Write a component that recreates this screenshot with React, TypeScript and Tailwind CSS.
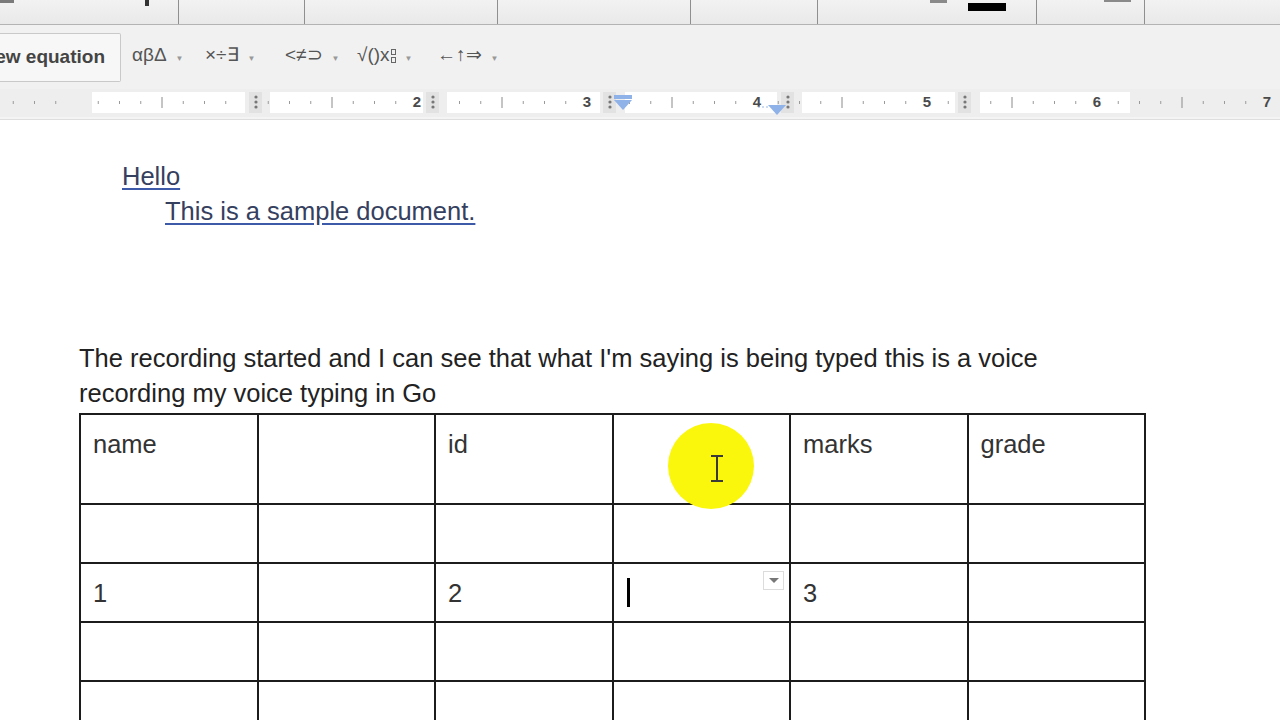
import React from 'react';

const font = { fontFamily: '"Liberation Sans", Arial, sans-serif' };

// column lines of the table, also used for ruler markers
const colLines = [258, 435, 612, 790, 967];
const whiteSegs: [number, number][] = [
  [92, 245],
  [270, 423],
  [447, 600],
  [625, 777],
  [802, 955],
  [980, 1130],
];

function Ruler() {
  const ticks: React.ReactNode[] = [];
  for (let k = -3; k <= 57; k++) {
    const x = 77 + k * 21.25;
    if (x > 1280) break;
    if (k % 8 === 0) {
      if (k > 8) {
        ticks.push(
          <text key={k} x={x} y={18} textAnchor="middle" fontSize={15} fontWeight={700} fill="#4a4a4a" style={font}>
            {k / 8}
          </text>,
        );
      }
    } else if (k % 4 === 0) {
      ticks.push(<line key={k} x1={x} x2={x} y1={8} y2={19} stroke="#8a8a8a" strokeWidth={1} />);
    } else {
      ticks.push(<line key={k} x1={x} x2={x} y1={12} y2={15} stroke="#9a9a9a" strokeWidth={1} />);
    }
  }

  return (
    <svg width={1280} height={28} className="block">
      <rect x={0} y={0} width={1280} height={28} fill="#eeeeee" />
      {whiteSegs.map(([a, b]) => (
        <rect key={a} x={a} y={3} width={b - a} height={21} fill="#ffffff" />
      ))}
      {ticks}
      {colLines.map(x => (
        <g key={x}>
          <rect x={x - 9} y={3} width={13} height={21} fill="#e2e2e2" />
          <circle cx={x - 2} cy={8} r={1.6} fill="#777" />
          <circle cx={x - 2} cy={13} r={1.6} fill="#777" />
          <circle cx={x - 2} cy={18} r={1.6} fill="#777" />
        </g>
      ))}
      {/* indent markers */}
      <rect x={614} y={6} width={18} height={4} fill="#8fb2e8" />
      <polygon points="614,11 632,11 623,21" fill="#8fb2e8" />
      <line x1={758} x2={768} y1={18} y2={18} stroke="#9bb6e0" strokeDasharray="2 2" />
      <polygon points="768,16 786,16 777,26" fill="#8fb2e8" />
    </svg>
  );
}

function TopStrip() {
  const segs = [
    [0, 178],
    [178, 304],
    [304, 497],
    [497, 690],
    [690, 817],
    [817, 1036],
    [1036, 1144],
    [1144, 1280],
  ];
  return (
    <div className="flex h-[25px] bg-[#ececec] border-b border-[#b3b3b3]">
      {segs.map(([a, b], i) => (
        <div
          key={a}
          className={`relative h-full bg-gradient-to-b from-[#f2f2f2] to-[#e9e9e9] ${i > 0 ? 'border-l border-[#8f8f8f]' : ''}`}
          style={{ width: b - a }}
        >
          {i === 0 && (
            <>
              <div className="absolute left-0 top-0 w-[14px] h-[3px] bg-[#7a7a7a]" />
              <div className="absolute left-[145px] top-0 w-[4px] h-[6px] bg-[#333]" />
            </>
          )}
          {i === 5 && (
            <>
              <div className="absolute left-[112px] top-0 w-[17px] h-[3px] bg-[#8a8a8a]" />
              <div className="absolute left-[150px] top-[3px] w-[38px] h-[8px] bg-black" />
            </>
          )}
          {i === 6 && <div className="absolute left-[67px] top-0 w-[27px] h-[2px] bg-[#8a8a8a]" />}
        </div>
      ))}
    </div>
  );
}

function Sym({ children, w }: { children: React.ReactNode; w: number }) {
  return (
    <div className="flex items-center text-[19px] text-[#555]" style={{ width: w }}>
      <span className="flex items-center">{children}</span>
      <span className="ml-[9px] mt-[8px] text-[8px] text-[#999]">▼</span>
    </div>
  );
}

function EquationBar() {
  return (
    <div className="flex items-start h-[64px] bg-[#f1f1f1]">
      <div className="mt-[8px] h-[49px] w-[121px] flex justify-end items-center overflow-hidden whitespace-nowrap bg-[#f7f7f7] border-y border-r border-[#c9c9c9] rounded-r-[2px] pr-[15px]">
        <span className="text-[19px] font-bold text-[#444]">New equation</span>
      </div>
      <div className="flex items-center h-[64px] ml-[11px] -mt-[2px]">
        <Sym w={73}>αβΔ</Sym>
        <Sym w={80}>×÷∃</Sym>
        <Sym w={72}>&lt;≠⊃</Sym>
        <Sym w={80}>
          √()x
          <span className="inline-flex flex-col gap-[2px] ml-[1px] mt-[2px]">
            <span className="block w-[5px] h-[6px] border border-[#666]" />
            <span className="block w-[5px] h-[6px] border border-[#666]" />
          </span>
        </Sym>
        <Sym w={70}>←↑⇒</Sym>
      </div>
    </div>
  );
}

const rows: string[][] = [
  ['name', '', 'id', '', 'marks', 'grade'],
  ['', '', '', '', '', ''],
  ['1', '', '2', '', '3', ''],
  ['', '', '', '', '', ''],
  ['', '', '', '', '', ''],
];
const rowHeights = [90, 59, 59, 59, 59];

export default function App() {
  return (
    <div className="relative w-[1280px] h-[720px] overflow-hidden bg-white" style={font}>
      <TopStrip />
      <EquationBar />
      <Ruler />
      <div className="h-[3px] bg-[#f4f4f4] border-b border-[#dedede]" />

      <div className="pl-[79px] pt-[39px] text-[25.5px] leading-[35px] text-[#222]">
        <div className="ml-[43px] text-[#35405e] underline decoration-[#3c5aa8] underline-offset-[3px]">Hello</div>
        <div className="ml-[86px] text-[#35405e] underline decoration-[#3c5aa8] underline-offset-[3px]">
          This is a sample document.
        </div>

        <p className="mt-[112px] w-[1010px]">
          The recording started and I can see that what I'm saying is being typed this is a voice recording my voice
          typing in Go
        </p>

        <table className="mt-[2px] w-[1067px] table-fixed border-collapse">
          <tbody>
            {rows.map((r, ri) => (
              <tr key={ri} style={{ height: rowHeights[ri] }}>
                {r.map((c, ci) => (
                  <td key={ci} className="relative align-top border-2 border-[#1c1c1c] pl-[12px] pt-[12px] text-[#333]">
                    {c}
                    {ri === 2 && ci === 3 && (
                      <>
                        <div className="absolute left-[13px] top-[14px] w-[3px] h-[29px] bg-black" />
                        <div className="absolute right-[5px] top-[7px] w-[21px] h-[19px] border border-[#dcdcdc] bg-white flex items-center justify-center">
                          <svg width="10" height="6" viewBox="0 0 10 6">
                            <polygon points="0,0 10,0 5,5" fill="#777" />
                          </svg>
                        </div>
                      </>
                    )}
                  </td>
                ))}
              </tr>
            ))}
          </tbody>
        </table>
      </div>

      {/* mouse highlight */}
      <div className="absolute left-[668px] top-[423px] w-[86px] h-[86px] rounded-full bg-[#fbf70c]" />
      <svg className="absolute left-[709px] top-[454px]" width="16" height="30" viewBox="0 0 16 30">
        <line x1="8" x2="8" y1="2" y2="27" stroke="#3a3a3a" strokeWidth="2" />
        <line x1="2" x2="14" y1="2" y2="2" stroke="#3a3a3a" strokeWidth="2" />
        <line x1="2" x2="14" y1="27" y2="27" stroke="#3a3a3a" strokeWidth="2" />
      </svg>
    </div>
  );
}
